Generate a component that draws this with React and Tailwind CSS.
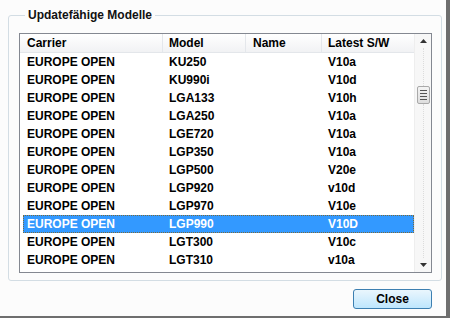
import React from "react";

const rows = [
  ["KU250", "V10a"],
  ["KU990i", "V10d"],
  ["LGA133", "V10h"],
  ["LGA250", "V10a"],
  ["LGE720", "V10a"],
  ["LGP350", "V10a"],
  ["LGP500", "V20e"],
  ["LGP920", "v10d"],
  ["LGP970", "V10e"],
  ["LGP990", "V10D"],
  ["LGT300", "V10c"],
  ["LGT310", "v10a"],
];

export default function App() {
  return (
    <div
      className="w-[450px] h-[318px] bg-[#fcfcfc] border-r-[4px] border-b-[2px] border-[#6e6e6e] flex flex-col text-[12px] font-bold text-black"
      style={{ fontFamily: '"Liberation Sans", Arial, sans-serif' }}
    >
      <fieldset className="ml-[8px] mt-[8px] w-[434px] h-[273px] border border-[#d3dde4] rounded-[3px] pl-[10px]">
        <legend className="ml-[6px] px-[3px] text-[12px] leading-[14px] text-[#111]">Updatefähige Modelle</legend>
        <div className="mt-[11px] w-[413px] h-[240px] border border-[#848891] bg-white flex overflow-hidden">
          <div className="w-[394px] flex flex-col">
            <div className="h-[19px] flex border-b border-[#e3e6ea] bg-gradient-to-b from-white to-[#f1f2f4] leading-[19px]">
              <div className="w-[143px] pl-[7px] border-r border-[#e4e7eb]">Carrier</div>
              <div className="w-[83px] pl-[6px] border-r border-[#e4e7eb]">Model</div>
              <div className="w-[76px] pl-[7px] border-r border-[#e4e7eb]">Name</div>
              <div className="flex-1 pl-[6px]">Latest S/W</div>
            </div>
            {rows.map(([m, v]) => {
              const sel = m === "LGP990";
              return (
                <div
                  key={m}
                  className={
                    "h-[18px] leading-[18px] flex ml-[3px] " +
                    (sel ? "bg-[#3399ff] text-white outline outline-1 outline-dotted outline-[#7a6a3a] -outline-offset-1" : "")
                  }
                >
                  <div className="w-[140px] pl-[4px]">EUROPE OPEN</div>
                  <div className="w-[83px] pl-[6px]">{m}</div>
                  <div className="w-[76px]"></div>
                  <div className="flex-1 pl-[6px]">{v}</div>
                </div>
              );
            })}
          </div>
          <div className="w-[17px] bg-[#f7f7f7] border-l border-[#eeeeee] flex flex-col items-center">
            <div className="h-[14px] flex items-center justify-center">
              <svg width="7" height="4" viewBox="0 0 7 4"><path d="M3.5 0 L7 4 L0 4 Z" fill="#333" /></svg>
            </div>
            <div className="h-[38px] w-[1px] border-l border-dotted border-[#dcdcdc]"></div>
            <div className="w-[13px] h-[18px] bg-gradient-to-b from-[#f4f4f4] to-[#dedede] border border-[#a9a9a9] rounded-[2px] flex flex-col items-center justify-center gap-[2px]">
              <div className="w-[7px] h-[1px] bg-[#555]"></div>
              <div className="w-[7px] h-[1px] bg-[#555]"></div>
              <div className="w-[7px] h-[1px] bg-[#555]"></div>
              <div className="w-[7px] h-[1px] bg-[#555]"></div>
            </div>
            <div className="flex-1 w-[1px] border-l border-dotted border-[#dcdcdc]"></div>
            <div className="h-[14px] flex items-center justify-center">
              <svg width="7" height="4" viewBox="0 0 7 4"><path d="M0 0 L7 0 L3.5 4 Z" fill="#333" /></svg>
            </div>
          </div>
        </div>
      </fieldset>
      <div className="flex justify-end pr-[14px] pt-[8px]">
        <button className="w-[79px] h-[20px] border border-[#3c7fb1] rounded-[3px] bg-gradient-to-b from-[#eaf6fd] to-[#bee6fd] text-[12px] font-bold leading-[18px] text-black">
          Close
        </button>
      </div>
    </div>
  );
}
